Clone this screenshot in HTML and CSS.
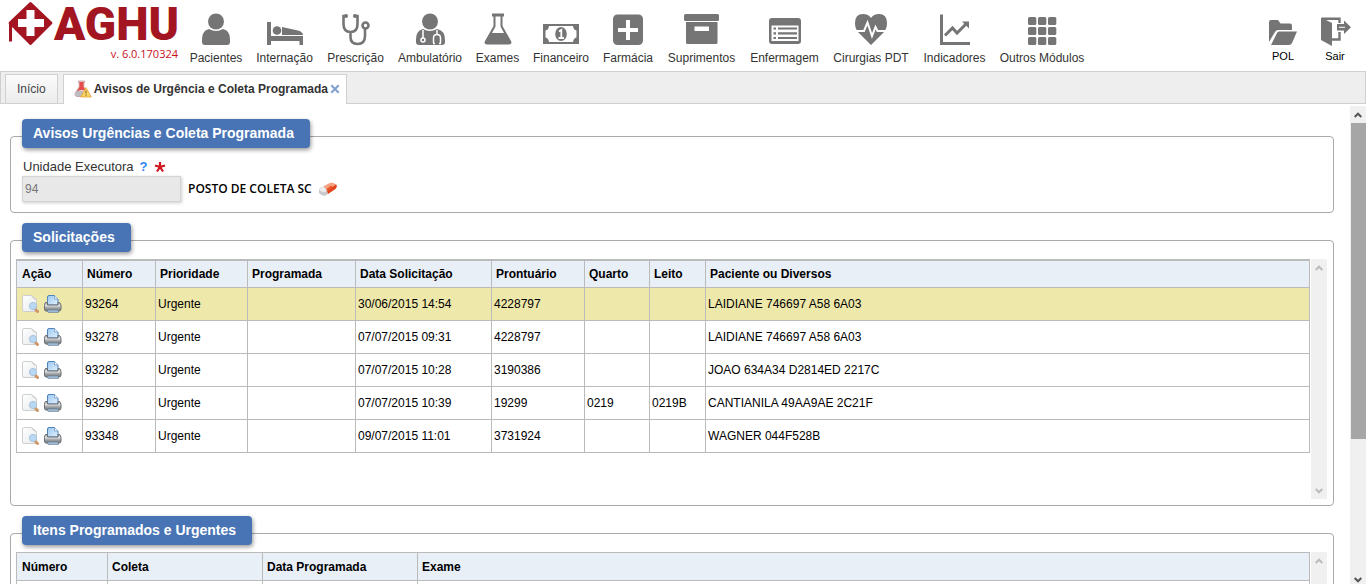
FILE: index.html
```html
<!DOCTYPE html>
<html lang="pt-BR">
<head>
<meta charset="utf-8">
<title>AGHU - Avisos de Urgência e Coleta Programada</title>
<link rel="stylesheet" href="styles.css">
</head>
<body>
<svg class="defs" aria-hidden="true">
  <defs>
    <linearGradient id="paper" x1="0" y1="0" x2="1" y2="1"><stop offset="0" stop-color="#fff"/><stop offset="1" stop-color="#e6eaec"/></linearGradient>
    <linearGradient id="metal" x1="0" y1="0" x2="0" y2="1"><stop offset="0" stop-color="#8a8c8f"/><stop offset=".3" stop-color="#e9eaeb"/><stop offset=".65" stop-color="#9da0a3"/><stop offset="1" stop-color="#75787b"/></linearGradient>
    <linearGradient id="sheet" x1="0" y1="0" x2="1" y2="1"><stop offset="0" stop-color="#9cc8f0"/><stop offset="1" stop-color="#e3f1fd"/></linearGradient>
    <symbol id="view" viewBox="0 0 18 18">
      <path d="M.5 2Q.5.5 2 .5H9.500L14.500 4.500V16.500H2Q.5 16.500.5 15Z" fill="url(#paper)" stroke="#cfd0cd"/>
      <path d="M9.500.5Q10.500 4 14.500 4.500" fill="none" stroke="#cfd0cd"/>
      <path d="M13.500 14.500L15.500 16.500" stroke="#cf9768" stroke-width="3" stroke-linecap="round"/>
      <circle cx="11" cy="11" r="3.600" fill="#b9d8f3" stroke="#aac4dc"/>
    </symbol>
    <symbol id="print" viewBox="0 0 18 18">
      <path d="M3.500 10V2Q3.500.5 5 .5H10.500L14 4V10Z" fill="url(#sheet)" stroke="#4f83bb"/>
      <path d="M10.500.5V4H14" fill="#f3f9fe" stroke="#6e9bcb" stroke-width=".8"/>
      <path d="M1.500 7.500H3.500V10H14V7.500H15.500Q17 8.500 17 11V14Q17 16 15 16H2Q.5 16 .5 14V10.500Q.5 8.500 1.500 7.500Z" fill="url(#metal)" stroke="#6b6e72"/>
      <path d="M3 15H14.500V17.300H4Z" fill="#a9c9e6" stroke="#63788d" stroke-width=".8"/>
    </symbol>
    <symbol id="up" viewBox="0 0 8 6"><path d="M.7 5L4 1.700L7.300 5" fill="none" stroke="currentColor" stroke-width="2"/></symbol>
    <symbol id="down" viewBox="0 0 8 6"><path d="M.7 1L4 4.300L7.300 1" fill="none" stroke="currentColor" stroke-width="2"/></symbol>
  </defs>
</svg>

<header class="topbar">
  <div class="brand">
    <a class="logo" href="#">
      <svg class="logo-mark" viewBox="0 0 46 46" aria-hidden="true">
        <path d="M21.500 2.500Q22.500 1.500 23.500 2.500L44 22Q45 23 44 24L23.500 44.500Q22.500 45.500 21.500 44.500L1 24Q0 23 1 22Z" fill="#a31621"/>
        <path d="M1 23H4V41.500H1Z" fill="#a31621"/>
        <path d="M4.800 28V42" stroke="#fff" stroke-width="1.500"/>
        <path d="M18.500 10H26.500V19H36V27H26.500V36H18.500V27H10V19H18.500Z" fill="#fff"/>
      </svg>
      <span class="logo-text">AGHU</span>
    </a>
    <span class="version">v. 6.0.170324</span>
  </div>
  <nav class="modules" aria-label="Módulos">
    <a href="#"><svg viewBox="0 0 36 34"><circle cx="18" cy="8.500" r="8"/><path d="M4 29V26Q4 17.500 11 16Q18 20 25 16Q32 17.500 32 26V29Q32 32 29 32H7Q4 32 4 29Z"/></svg>Pacientes</a>
    <a href="#"><svg viewBox="0 0 36 34"><path d="M0 9H4V23H36V32H32.500V28H4V32H0ZM15 14L31 17.500Q36 19 36 22H15Z"/><circle cx="10" cy="17.500" r="4.300"/></svg>Internação</a>
    <a href="#"><svg viewBox="0 0 36 34"><g class="line" stroke-width="2.600"><path d="M8 3H5.500V11Q5.500 19 12.500 19T19.500 11V3H17M12.500 19V24Q12.500 31 19.500 31Q27 31 27 23V16"/><circle cx="27.500" cy="12.500" r="3"/></g><circle cx="8" cy="3" r="2"/><circle cx="17" cy="3" r="2"/></svg>Prescrição</a>
    <a href="#"><svg viewBox="0 0 36 34"><circle cx="18" cy="8.500" r="8"/><path d="M4 29V26Q4 17.500 11 16Q18 20 25 16Q33 17.500 33 27V29Q33 32 30 32H7Q4 32 4 29Z"/><g class="knock" stroke-width="1.500"><path d="M11 17V25M25 17V22M21.500 30V25Q21.500 21.500 25 21.500T28.500 25V30M21 30.500H23M27 30.500H29"/><circle cx="11" cy="27" r="2"/></g></svg>Ambulatório</a>
    <a href="#"><svg viewBox="0 0 36 34"><path fill-rule="evenodd" d="M12 .5H24V3.500H22.500V13L31 28Q32.500 31.500 29 31.500H7Q3.500 31.500 5 28L13.500 13V3.500H12ZM15.500 3.500V13.500L12 20H24L20.500 13.500V3.500Z"/></svg>Exames</a>
    <a href="#"><svg viewBox="0 0 36 34"><path fill-rule="evenodd" d="M0 11H36V31H0ZM6 13Q5.500 17 2.500 17.500V24.500Q5.500 25 6 29H30Q30.500 25 33.500 24.500V17.500Q30.500 17 30 13Z"/><ellipse cx="18" cy="21" rx="5.800" ry="7"/><path class="knock" stroke-width="1.800" d="M16 18.500L18.300 17V25M15.500 25H21"/></svg>Financeiro</a>
    <a href="#"><svg viewBox="0 0 36 34"><rect x="3" y="1.500" width="30" height="30.500" rx="4.500"/><path class="knock" stroke-width="4" d="M18 7V27M8 17H28"/></svg>Farmácia</a>
    <a href="#"><svg viewBox="0 0 36 34"><rect x="0" y="1" width="35" height="7" rx="1.500"/><path fill-rule="evenodd" d="M2 9H33.500V29.500Q33.500 31 32 31H3.500Q2 31 2 29.500ZM10.500 13.500V18H25V13.500Z"/></svg>Suprimentos</a>
    <a href="#"><svg viewBox="0 0 36 34"><rect x="2" y="5" width="32" height="26" rx="3"/><rect x="4.500" y="12.500" width="27" height="15.500" fill="#fff"/><path class="line" stroke-width="2.200" d="M6.500 15.500H9M11 15.500H30M6.500 20.300H9M11 20.300H30M6.500 25H9M11 25H30"/></svg>Enfermagem</a>
    <a href="#"><svg viewBox="0 0 36 34"><path d="M18 32L5 19Q2 15.500 2 10Q2 1 10 1Q15.500 1 18 5Q20.500 1 26 1Q34 1 34 10Q34 15.500 31 19Z"/><path class="knock" stroke-width="2" d="M1 18H11L14.500 9.500L19 23L22.500 14L24.500 18H35"/></svg>Cirurgias PDT</a>
    <a href="#"><svg viewBox="0 0 36 34"><path d="M3 1.500H6V29H33V32H3Z"/><path class="line" stroke-width="3" d="M8 22.500L15.500 15L20 20L29.500 10.500"/><path d="M25 8.500H32V15.500Z"/></svg>Indicadores</a>
    <a href="#"><svg viewBox="0 0 36 34"><g id="dots"><rect x="4" y="4" width="8.300" height="8" rx="1.500"/><rect x="14" y="4" width="8.300" height="8" rx="1.500"/><rect x="24" y="4" width="8.300" height="8" rx="1.500"/></g><use href="#dots" y="10"/><use href="#dots" y="20"/></svg>Outros Módulos</a>
  </nav>
  <nav class="session" aria-label="Sessão">
    <a href="#"><svg viewBox="0 0 36 34"><path d="M4 29V9Q4 7 6 7H13L15.500 10.500H25Q27 10.500 27 12.500V17H13Q11 17 10 19Z"/><path d="M6 32L12 20Q12.500 18.500 14 18.500H32L27 30Q26 32 24 32Z"/></svg>POL</a>
    <a href="#"><svg viewBox="0 0 36 34"><path d="M4 4.500L15 10V33L4 27Z"/><path class="line" stroke-width="2.400" d="M5 5.700H22.500V10M22.500 19V26.500H15"/><path d="M20 11H27V7.500L34 14.300L27 21V17.500H20Z"/><path class="knock" stroke-width="1" d="M22 14.300H28"/></svg>Sair</a>
  </nav>
</header>

<div class="tabs">
  <a class="tab" href="#">Início</a>
  <div class="tab tab-active">
    <svg class="tab-icon" viewBox="0 0 18 18" aria-hidden="true">
      <path d="M4.500 1H10.500V2.500H9.800V7L14 13Q15.500 16.500 12 16.500H3Q-.2 16 1.500 12.500L5.200 7V2.500H4.500Z" fill="#f1d9d9" stroke="#a77" stroke-width=".6"/>
      <path d="M5.500 2H9.500V7L12.500 11.500Q7 8.500 2.500 12L5.500 7Z" fill="#e44c4c"/>
      <path d="M2 12Q7 9 13 13.500L13.500 15.500L12 16.300H3Q.5 15 2 12Z" fill="#b9bdc2"/>
      <path d="M12 7.500L17.300 17H6.700Z" fill="#fbd560" stroke="#e2a13b" stroke-width=".8" stroke-linejoin="round"/>
      <path d="M12 10.500V13.500M12 14.500V15.700" stroke="#8a6a36" stroke-width="1.200"/>
    </svg>
    <span>Avisos de Urgência e Coleta Programada</span>
    <button class="close" type="button" aria-label="Fechar"><svg viewBox="0 0 10 10"><path d="M1.300 1.300L8.700 8.700M8.700 1.300L1.300 8.700" stroke="#7f9fd0" stroke-width="2"/></svg></button>
  </div>
</div>

<div class="viewport">
  <main class="page">
    <section class="panel panel-form">
      <h2>Avisos Urgências e Coleta Programada</h2>
      <form class="unit">
        <div class="unit-label">
          <label for="unidade">Unidade Executora</label>
          <span class="help">?</span>
          <svg class="required" viewBox="0 0 12 12" aria-hidden="true"><path d="M6 6V1M6 6L1 4.500M6 6L11 4.500M6 6L3 10.500M6 6L9 10.500" stroke="#d3141c" stroke-width="2.200"/></svg>
        </div>
        <div class="unit-field">
          <input id="unidade" type="text" value="94" disabled>
          <strong>POSTO DE COLETA SC</strong>
          <button class="erase" type="button" aria-label="Limpar"><svg viewBox="0 0 20 16"><path d="M1 9Q1 7.500 3 6.500L12 2Q13.500 1.300 15 2L18 3.500Q19 4 18.700 5.500L18 7.500L7.500 14.500Q6 15 5 14.500L2 13Q.5 12 1 9Z" fill="#c9cacb"/><path d="M5.500 5.500L12 2Q13.500 1.300 15 2L18 3.500L9 9.500Z" fill="#f7a27e"/><path d="M9 9.500L18 3.500Q19 4 18.700 5.500L18 7.500L10 13Z" fill="#e5421b"/><path d="M1 8.500L5.500 5.500L9 9.500L5 11.500Z" fill="#eee"/><path d="M9 9.300L14 5.500" stroke="#e8582c" stroke-width="2.500"/></svg></button>
        </div>
      </form>
    </section>

    <section class="panel">
      <h2>Solicitações</h2>
      <div class="scroller scroller-requests">
        <table class="grid requests">
          <colgroup><col class="w66"><col class="w73"><col class="w92"><col class="w108"><col class="w136"><col class="w93"><col class="w65"><col class="w56"><col></colgroup>
          <thead><tr><th>Ação</th><th>Número</th><th>Prioridade</th><th>Programada</th><th>Data Solicitação</th><th>Prontuário</th><th>Quarto</th><th>Leito</th><th>Paciente ou Diversos</th></tr></thead>
          <tbody>
            <tr class="selected"><td class="actions"><button type="button" aria-label="Visualizar"><svg><use href="#view"/></svg></button><button type="button" aria-label="Imprimir"><svg><use href="#print"/></svg></button></td><td>93264</td><td>Urgente</td><td></td><td>30/06/2015 14:54</td><td>4228797</td><td></td><td></td><td>LAIDIANE 746697 A58 6A03</td></tr>
            <tr><td class="actions"><button type="button" aria-label="Visualizar"><svg><use href="#view"/></svg></button><button type="button" aria-label="Imprimir"><svg><use href="#print"/></svg></button></td><td>93278</td><td>Urgente</td><td></td><td>07/07/2015 09:31</td><td>4228797</td><td></td><td></td><td>LAIDIANE 746697 A58 6A03</td></tr>
            <tr><td class="actions"><button type="button" aria-label="Visualizar"><svg><use href="#view"/></svg></button><button type="button" aria-label="Imprimir"><svg><use href="#print"/></svg></button></td><td>93282</td><td>Urgente</td><td></td><td>07/07/2015 10:28</td><td>3190386</td><td></td><td></td><td>JOAO 634A34 D2814ED 2217C</td></tr>
            <tr><td class="actions"><button type="button" aria-label="Visualizar"><svg><use href="#view"/></svg></button><button type="button" aria-label="Imprimir"><svg><use href="#print"/></svg></button></td><td>93296</td><td>Urgente</td><td></td><td>07/07/2015 10:39</td><td>19299</td><td>0219</td><td>0219B</td><td>CANTIANILA 49AA9AE 2C21F</td></tr>
            <tr><td class="actions"><button type="button" aria-label="Visualizar"><svg><use href="#view"/></svg></button><button type="button" aria-label="Imprimir"><svg><use href="#print"/></svg></button></td><td>93348</td><td>Urgente</td><td></td><td>09/07/2015 11:01</td><td>3731924</td><td></td><td></td><td>WAGNER 044F528B</td></tr>
          </tbody>
        </table>
        <div class="scrollbar scrollbar-idle" aria-hidden="true"><svg><use href="#up"/></svg><svg><use href="#down"/></svg></div>
      </div>
    </section>

    <section class="panel">
      <h2>Itens Programados e Urgentes</h2>
      <div class="scroller scroller-items">
        <table class="grid">
          <colgroup><col class="w91"><col class="w155"><col class="w155"><col></colgroup>
          <thead><tr><th>Número</th><th>Coleta</th><th>Data Programada</th><th>Exame</th></tr></thead>
          <tbody><tr><td></td><td></td><td></td><td></td></tr></tbody>
        </table>
        <div class="scrollbar scrollbar-idle" aria-hidden="true"><svg><use href="#up"/></svg><svg><use href="#down"/></svg></div>
      </div>
    </section>
  </main>
  <div class="scrollbar scrollbar-page" aria-hidden="true"><svg><use href="#up"/></svg><div class="thumb"></div><svg><use href="#down"/></svg></div>
</div>
</body>
</html>
```
FILE: styles.css
```css
* { box-sizing: border-box; }

body {
  margin: 0;
  height: 100vh;
  display: flex;
  flex-direction: column;
  overflow: hidden;
  background: #fff;
  color: #000;
  font: 12px/14px "Liberation Sans", Arial, sans-serif;
}

a { color: inherit; text-decoration: none; }
svg { display: block; }
button { border: 0; padding: 0; background: none; cursor: pointer; }
.defs { position: absolute; width: 0; height: 0; }

/* Header */
.topbar { display: flex; height: 71px; flex: none; }
.brand { width: 183px; padding: 0 5px 0 8px; flex: none; }
.logo { display: flex; height: 46px; }
.logo-mark { width: 46px; height: 46px; flex: none; }
.logo-text { color: #a31621; font: 900 46px/48px Roboto, sans-serif; }
.version { display: block; text-align: right; color: #c8101c; font: 11px/16px "Open Sans", sans-serif; }

.modules {
  display: grid;
  grid-template-columns: 66px 71px 71px 78px 57px 70px 64px 83px 83px 90px 77px 98px;
  padding-top: 13px;
  color: #333;
}
.modules a, .session a {
  display: flex;
  flex-direction: column;
  align-items: center;
  gap: 4px;
  white-space: nowrap;
}
.modules svg, .session svg { width: 36px; height: 34px; fill: #757575; }
.topbar .line { fill: none; stroke: #757575; }
.topbar .knock { fill: none; stroke: #fff; }

.session { display: flex; margin-left: auto; padding: 13px 5px 0 0; font-size: 11px; line-height: 12px; }
.session a { width: 52px; gap: 3px; }

/* Tabs */
.tabs {
  display: flex;
  gap: 5px;
  height: 33px;
  flex: none;
  padding: 2px 4px 0;
  border: 1px solid #d0d0d0;
  background: #eee;
}
.tab {
  display: flex;
  align-items: center;
  padding: 0 11px;
  border: 1px solid #d0d0d0;
  border-bottom: 0;
  background: linear-gradient(#fbfbfb, #ececec);
  color: #444;
}
.tab-active {
  gap: 2px;
  margin-bottom: -1px;
  padding: 0 6px 1px 10px;
  background: #fff;
  color: #333;
  font-weight: bold;
}
.tab-icon { width: 18px; height: 18px; }
.close svg { width: 10px; height: 10px; }

/* Page */
.viewport { display: flex; flex: 1; min-height: 0; padding-top: 2px; }
.page { flex: 1; min-width: 0; overflow: hidden; padding: 30px 16px 0 10px; }
.panel {
  margin-bottom: 27px;
  padding: 0 6px 6px 5px;
  border: 1px solid #aaa;
  border-radius: 4px;
}
.panel h2 {
  width: fit-content;
  margin: -18px 0 7px 6px;
  padding: 6px 16px 6px 11px;
  border-radius: 4px;
  background: #4874b5;
  box-shadow: 1px 2px 4px rgba(0, 0, 0, .4);
  color: #fff;
  font-size: 14px;
  line-height: 17px;
}

.panel-form { padding-bottom: 10px; }
.unit { padding: 3px 6px 0; }
.unit-label, .unit-field { display: flex; align-items: center; }
.unit-label { height: 18px; gap: 6px; color: #333; padding-left: 1px; font-size: 13px; }
.help { color: #2f86f0; font-weight: bold; }
.required { width: 12px; height: 12px; }
.unit-field input {
  width: 159px;
  height: 26px;
  padding: 0 2px;
  border: 1px solid #d4d4d4;
  background: #e8e8e8;
  box-shadow: 1px 1px 3px rgba(0, 0, 0, .2);
  color: #777;
  font: 12px "Liberation Sans", Arial, sans-serif;
}
.unit-field strong { margin: 0 6px 0 7px; font: 600 12px/16px "Open Sans", sans-serif; }
.erase svg { width: 20px; height: 16px; }

/* Tables */
.scroller { display: flex; gap: 1px; }
.scroller-requests { height: 240px; }
.scroller-items { height: 220px; }
.grid {
  flex: 1;
  align-self: flex-start;
  table-layout: fixed;
  border-collapse: collapse;
}
.grid th, .grid td { border: 1px solid #bbb; text-align: left; white-space: nowrap; }
.grid th { height: 28px; padding: 0 4px; background: #e8eff7; }
.grid th:first-child { padding-left: 5px; }
.grid td { height: 33px; padding: 0 2px; }
.grid.requests th { height: 27px; border-top-width: 2px; }
.selected { background: #eee8aa; }
.grid .actions { padding-left: 5px; }
.actions button { display: inline-block; width: 18px; height: 18px; margin-right: 4px; vertical-align: middle; }
.actions svg { width: 18px; height: 18px; }
.w56 { width: 56px; }
.w65 { width: 65px; }
.w66 { width: 66px; }
.w73 { width: 73px; }
.w91 { width: 91px; }
.w92 { width: 92px; }
.w93 { width: 93px; }
.w108 { width: 108px; }
.w136 { width: 136px; }
.w155 { width: 155px; }

/* Scrollbars */
.scrollbar {
  display: flex;
  flex-direction: column;
  align-items: center;
  justify-content: space-between;
  width: 16px;
  flex: none;
  padding: 6px 0 5px;
  background: #f0f0f0;
}
.scrollbar svg { width: 8px; height: 6px; flex: none; }
.scrollbar-idle { color: #bbb; }
.scrollbar-page { justify-content: flex-start; padding: 6px 0 1px; color: #555; }
.thumb { width: 15px; height: 67%; margin: 5px 0 auto; background: #a6a6a6; }
```
